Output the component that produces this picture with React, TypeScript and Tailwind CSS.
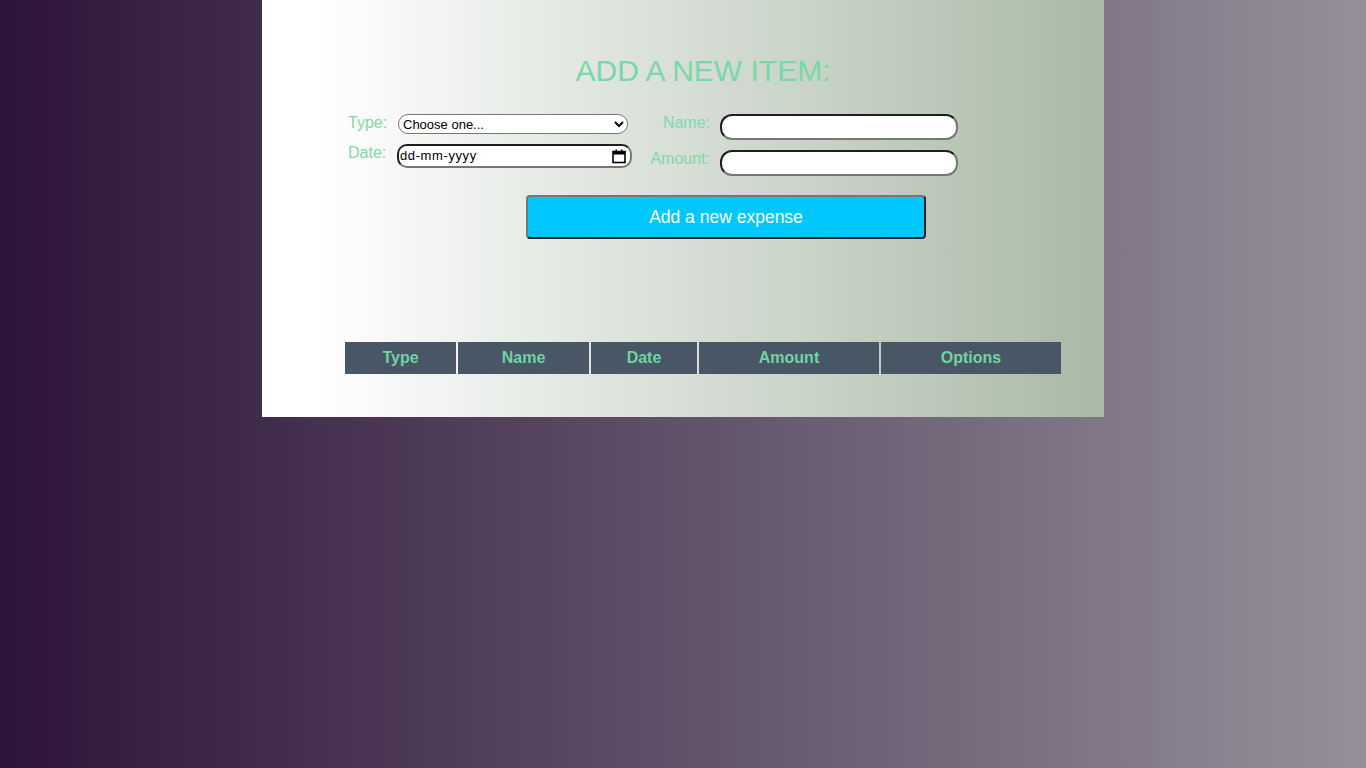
import React from 'react'

const font = { fontFamily: '"Liberation Sans", Arial, sans-serif' }

const columns = [
  { label: 'Type', w: 'w-[111px]' },
  { label: 'Name', w: 'w-[131px]' },
  { label: 'Date', w: 'w-[106px]' },
  { label: 'Amount', w: 'w-[180px]' },
  { label: 'Options', w: 'w-[180px]' },
]

function TextField() {
  return (
    <input
      type="text"
      className="mt-[2px] ml-[10px] h-[26px] w-[238px] rounded-[12px] border-2 border-t-[#1e1e1e] border-l-[#1e1e1e] border-r-[#777777] border-b-[#777777] bg-white px-2 text-[13px] text-black outline-none"
    />
  )
}

function CalendarIcon() {
  return (
    <svg width="14" height="15" viewBox="0 0 14 15" className="shrink-0">
      <rect x="1" y="2.5" width="12" height="11" fill="none" stroke="#000" strokeWidth="1.6" />
      <rect x="1" y="2.5" width="12" height="3" fill="#000" />
      <rect x="3.5" y="0.5" width="1.5" height="3" fill="#000" />
      <rect x="9" y="0.5" width="1.5" height="3" fill="#000" />
    </svg>
  )
}

export default function App() {
  return (
    <div className="min-h-screen w-full bg-[linear-gradient(to_right,#2d1439,#958f9a)]" style={font}>
      <div className="mx-auto h-[417px] w-[842px] bg-[linear-gradient(to_right,#ffffff_6%,#a9b9a6_100%)]">
        <h1 className="pt-[52px] pl-[40px] text-center text-[30px] leading-[37px] text-[#79d8a8]">
          ADD A NEW ITEM:
        </h1>

        <form className="mt-[23px] flex pl-[86px] text-[16px] leading-[18px] text-[#80d9ab]">
          <div className="flex flex-col">
            <div className="flex items-start">
              <label className="mt-[2px] w-[50px]">Type:</label>
              <select className="mt-[2px] h-[20px] w-[230px] rounded-[10px] border border-[#767676] bg-white pl-0 text-[13px] leading-[16px] text-black">
                <option>Choose one...</option>
                <option>Food</option>
                <option>Transport</option>
                <option>Bills</option>
              </select>
            </div>
            <div className="mt-[8px] flex items-start">
              <label className="mt-[2px] w-[49px]">Date:</label>
              <div className="mt-[2px] flex h-[24px] w-[235px] items-center justify-between rounded-[10px] border-2 border-t-[#1e1e1e] border-l-[#1e1e1e] border-r-[#777777] border-b-[#777777] bg-white pl-[1px] pr-[4px] text-[13px] tracking-[0.6px] text-black">
                <span>dd-mm-yyyy</span>
                <CalendarIcon />
              </div>
            </div>
          </div>

          <div className="ml-[8px] flex flex-col">
            <div className="flex items-start">
              <label className="mt-[2px] w-[70px] text-right">Name:</label>
              <TextField />
            </div>
            <div className="mt-[8px] flex items-start">
              <label className="mt-[2px] w-[70px] text-right">Amount:</label>
              <TextField />
            </div>
          </div>
        </form>

        <button
          type="button"
          className="mt-[19px] ml-[264px] h-[44px] w-[400px] rounded-[4px] border-2 border-t-[#767676] border-l-[#767676] border-r-[#1f1f1f] border-b-[#1f1f1f] bg-[#00c8ff] text-[17.5px] text-white"
        >
          Add a new expense
        </button>

        <div className="mt-[103px] ml-[83px] flex gap-[2px]">
          {columns.map(col => (
            <div
              key={col.label}
              className={`${col.w} flex h-[32px] items-center justify-center bg-[#485665] text-[16px] font-bold text-[#6fd4a1]`}
            >
              {col.label}
            </div>
          ))}
        </div>
      </div>
    </div>
  )
}
